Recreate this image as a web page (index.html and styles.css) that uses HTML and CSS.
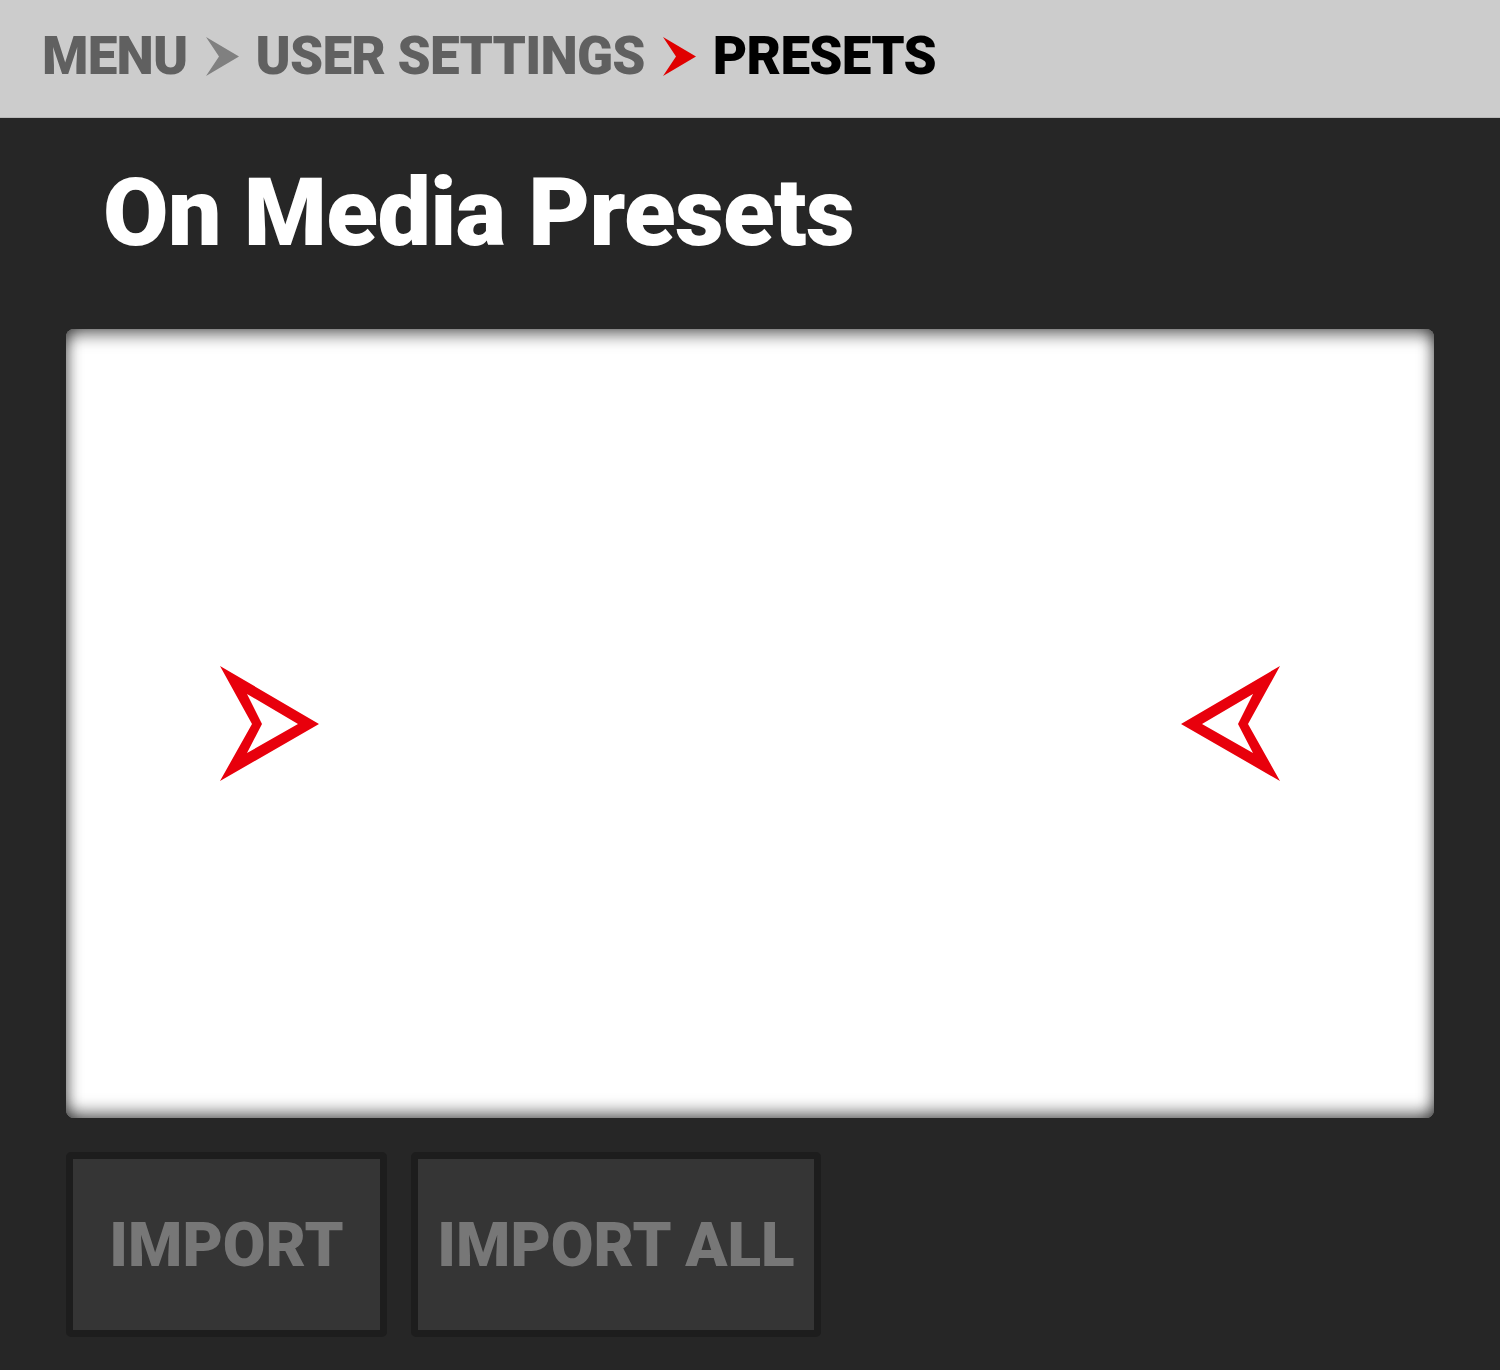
FILE: index.html
```html
<!DOCTYPE html>
<html lang="en">
<head>
<meta charset="utf-8">
<title>Presets</title>
<link rel="stylesheet" href="styles.css">
</head>
<body>
<header class="crumbs">
  <span class="crumb">MENU</span>
  <svg class="chev" viewBox="0 0 33 39" width="33" height="39"><path d="M0 0 L33 19.5 L0 39 L13 19.5 Z" fill="#808080"/></svg>
  <span class="crumb">USER SETTINGS</span>
  <svg class="chev" viewBox="0 0 33 39" width="33" height="39"><path d="M0 0 L33 19.5 L0 39 L13 19.5 Z" fill="#e00000"/></svg>
  <span class="crumb current">PRESETS</span>
</header>
<main class="main">
  <h1 class="title">On Media Presets</h1>
  <section class="panel">
    <svg class="arrow" viewBox="0 0 101 118" width="101" height="118"><path fill-rule="evenodd" fill="#e8000c" d="M1 1 L100 59 L1 116 L33 59 Z M28 29 L43 59 L28 88 L79 59 Z"/></svg>
    <svg class="arrow" viewBox="0 0 101 118" width="101" height="118"><path fill-rule="evenodd" fill="#e8000c" transform="translate(101 0) scale(-1 1)" d="M1 1 L100 59 L1 116 L33 59 Z M28 29 L43 59 L28 88 L79 59 Z"/></svg>
  </section>
  <div class="actions">
    <button class="btn btn-import">IMPORT</button>
    <button class="btn btn-all">IMPORT ALL</button>
  </div>
</main>
</body>
</html>
```
FILE: styles.css
```css
html, body {
  margin: 0;
  padding: 0;
}
body {
  background: #262626;
  font-family: Roboto, "Liberation Sans", sans-serif;
  width: 1500px;
  height: 1370px;
  overflow: hidden;
}
.crumbs {
  height: 118px;
  box-sizing: border-box;
  background: #cccccc;
  border-bottom: 1px solid #b8b8b8;
  display: flex;
  align-items: flex-start;
  padding: 30px 0 0 42px;
}
.crumb {
  font-size: 53px;
  line-height: 53px;
  font-weight: 900;
  color: #606060;
  letter-spacing: -0.75px;
}
.crumb.current {
  color: #000;
}
.chev {
  margin: 7px 17px 0 18px;
  flex: none;
}
.main {
  padding: 47px 66px 0 66px;
}
.title {
  margin: 0 0 0 37px;
  font-size: 95px;
  line-height: 96px;
  font-weight: 900;
  color: #fff;
  letter-spacing: -0.7px;
}
.panel {
  margin-top: 68px;
  height: 789px;
  background: #fff;
  border-radius: 8px;
  box-shadow:
    inset 0 14px 16px -8px rgba(0, 0, 0, 0.55),
    inset 0 -14px 16px -8px rgba(0, 0, 0, 0.55),
    inset 12px 0 14px -8px rgba(0, 0, 0, 0.4),
    inset -12px 0 14px -8px rgba(0, 0, 0, 0.4);
  display: flex;
  align-items: center;
  justify-content: space-between;
  padding: 0 153px;
}
.arrow {
  flex: none;
}
.actions {
  margin-top: 34px;
  display: flex;
  gap: 24px;
}
.btn {
  height: 185px;
  box-sizing: border-box;
  border: 7px solid #1d1d1d;
  border-radius: 5px;
  background: #353535;
  color: #777777;
  font-family: Roboto, "Liberation Sans", sans-serif;
  font-weight: 900;
  font-size: 62px;
  letter-spacing: 0;
  padding: 0;
  margin: 0;
}
.btn-import {
  width: 321px;
}
.btn-all {
  width: 410px;
}
```
